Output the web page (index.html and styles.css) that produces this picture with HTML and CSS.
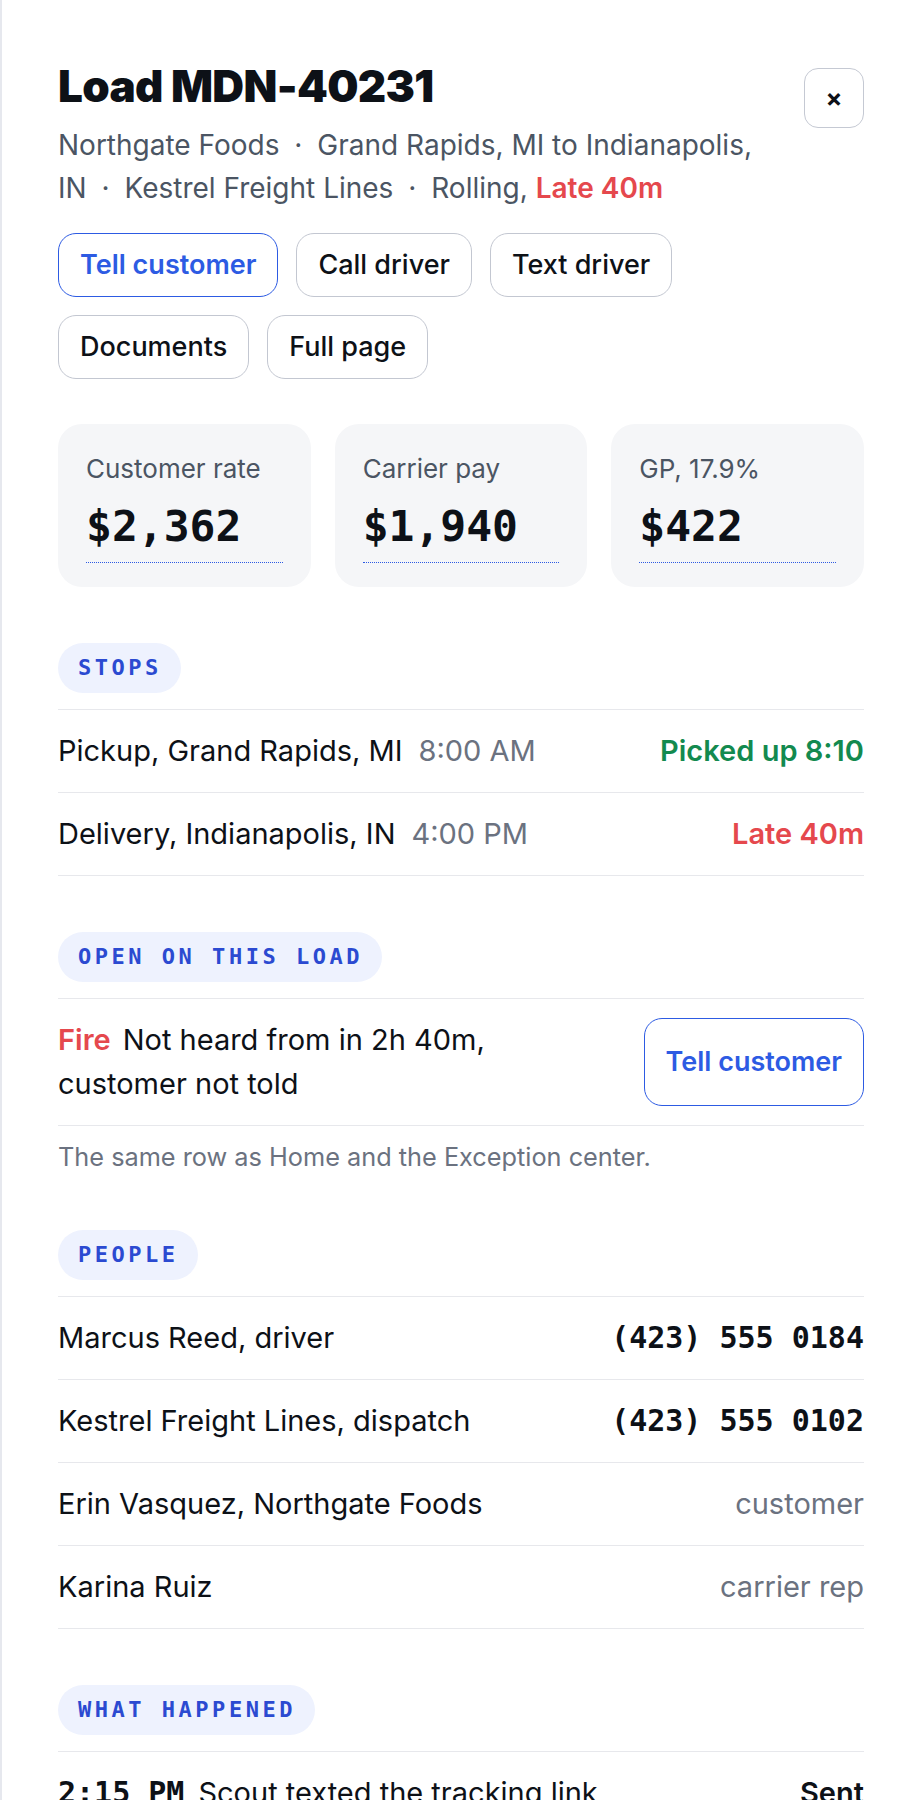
FILE: index.html
```html
<!DOCTYPE html>
<html lang="en">
<head>
    <meta charset="UTF-8">
    <meta name="viewport" content="width=device-width, initial-scale=1.0">
    <title>Load MDN-40231</title>
    <link rel="stylesheet" href="styles.css">
</head>
<body>
    <div class="panel">
        <div class="header">
            <div>
                <h1 class="title">Load MDN-40231</h1>
                <p class="subtitle">Northgate Foods <span class="sep">·</span> Grand Rapids, MI to Indianapolis, IN <span class="sep">·</span> Kestrel Freight Lines <span class="sep">·</span> Rolling, <span class="late">Late 40m</span></p>
            </div>
            <button class="close" type="button">×</button>
        </div>

        <div class="actions">
            <button class="btn primary" type="button">Tell customer</button>
            <button class="btn" type="button">Call driver</button>
            <button class="btn" type="button">Text driver</button>
            <button class="btn" type="button">Documents</button>
            <button class="btn" type="button">Full page</button>
        </div>

        <div class="stats">
            <div class="stat">
                <div class="stat-label">Customer rate</div>
                <div class="stat-value">$2,362</div>
            </div>
            <div class="stat">
                <div class="stat-label">Carrier pay</div>
                <div class="stat-value">$1,940</div>
            </div>
            <div class="stat">
                <div class="stat-label">GP, 17.9%</div>
                <div class="stat-value">$422</div>
            </div>
        </div>

        <div class="section">
            <span class="pill">STOPS</span>
            <div class="list">
                <div class="row">
                    <div>Pickup, Grand Rapids, MI<span class="time">8:00 AM</span></div>
                    <div class="ok">Picked up 8:10</div>
                </div>
                <div class="row">
                    <div>Delivery, Indianapolis, IN<span class="time">4:00 PM</span></div>
                    <div class="bad">Late 40m</div>
                </div>
            </div>
        </div>

        <div class="section">
            <span class="pill">OPEN ON THIS LOAD</span>
            <div class="list">
                <div class="row">
                    <div class="grow"><span class="fire">Fire</span>Not heard from in 2h 40m, customer not told</div>
                    <button class="btn primary" type="button">Tell customer</button>
                </div>
            </div>
            <p class="note">The same row as Home and the Exception center.</p>
        </div>

        <div class="section">
            <span class="pill">PEOPLE</span>
            <div class="list">
                <div class="row">
                    <div>Marcus Reed, driver</div>
                    <div class="mono">(423) 555 0184</div>
                </div>
                <div class="row">
                    <div>Kestrel Freight Lines, dispatch</div>
                    <div class="mono">(423) 555 0102</div>
                </div>
                <div class="row">
                    <div>Erin Vasquez, Northgate Foods</div>
                    <div class="role">customer</div>
                </div>
                <div class="row">
                    <div>Karina Ruiz</div>
                    <div class="role">carrier rep</div>
                </div>
            </div>
        </div>

        <div class="section">
            <span class="pill">WHAT HAPPENED</span>
            <div class="list">
                <div class="row">
                    <div><span class="mono stamp">2:15 PM</span>Scout texted the tracking link</div>
                    <div class="strong">Sent</div>
                </div>
                <div class="row">
                    <div><span class="mono stamp">1:35 PM</span>Last ping from the driver app</div>
                    <div class="role">Rolling</div>
                </div>
            </div>
        </div>
    </div>
</body>
</html>
```

FILE: styles.css
```css
body { margin: 0; background: #fff; color: #0d1117; font-family: Inter, "Noto Sans", sans-serif; }
.panel { border-left: 2px solid #e6e8ee; padding: 60px 56px 56px; min-height: 1800px; box-sizing: border-box; }

.header { display: flex; justify-content: space-between; align-items: flex-start; gap: 24px; }
.title { margin: 0; font-size: 44px; line-height: 52px; font-weight: 900; letter-spacing: -0.015em; }
.subtitle { margin: 12px 0 0; font-size: 28px; line-height: 42.5px; color: #4b5563; }
.sep { margin: 0 7px; }
.late { color: #e5484d; font-weight: 600; }
.close { flex-shrink: 0; width: 60px; height: 60px; margin-top: 8px; padding: 0; border: 1.5px solid #c5c9d3; border-radius: 14px; background: #fff; color: #0d1117; font-family: Inter, sans-serif; font-size: 25px; font-weight: 700; cursor: pointer; }

.actions { display: flex; flex-wrap: wrap; gap: 18px; margin-top: 24px; }
.btn { display: inline-flex; align-items: center; justify-content: center; padding: 13px 21px; border: 1.5px solid #c3c7d1; border-radius: 18px; background: #fff; color: #0d1117; font-family: inherit; font-size: 27px; font-weight: 500; line-height: 36px; cursor: pointer; }
.btn.primary { border-color: #2d5be3; color: #2d5be3; font-weight: 600; }

.stats { display: grid; grid-template-columns: repeat(3, 1fr); gap: 24px; margin-top: 45px; }
.stat { padding: 28px 28px 24px; border-radius: 24px; background: #f5f6f8; }
.stat-label { font-size: 26px; line-height: 33px; color: #4b5563; }
.stat-value { margin-top: 16px; padding-bottom: 11px; border-bottom: 1.5px dotted #2d5be3; font-family: "DejaVu Sans Mono", monospace; font-size: 43px; font-weight: 700; line-height: 50px; }

.section { margin-top: 56px; }
.pill { display: inline-block; padding: 12px 19px 12px 20px; border-radius: 999px; background: #eef2fe; color: #2b4ad1; font-family: "DejaVu Sans Mono", monospace; font-size: 22px; font-weight: 700; line-height: 26px; letter-spacing: 0.16em; }
.list { margin-top: 16px; border-top: 1.5px solid #e7e8ec; }
.row { display: flex; justify-content: space-between; gap: 24px; padding: 19px 0; border-bottom: 1.5px solid #e7e8ec; font-size: 29px; line-height: 44px; }
.grow { flex: 1; }
.time { margin-left: 16px; color: #6b7280; }
.ok { color: #138a4f; font-weight: 600; }
.bad { color: #e5484d; font-weight: 600; }
.fire { margin-right: 12px; color: #e5484d; font-weight: 600; }
.note { margin: 14px 0 0; font-size: 25.3px; line-height: 34px; color: #6b7280; }
.mono { font-family: "DejaVu Sans Mono", monospace; font-size: 30px; font-weight: 700; }
.stamp { margin-right: 14px; }
.role { color: #6b7280; }
.strong { font-weight: 600; }
```
